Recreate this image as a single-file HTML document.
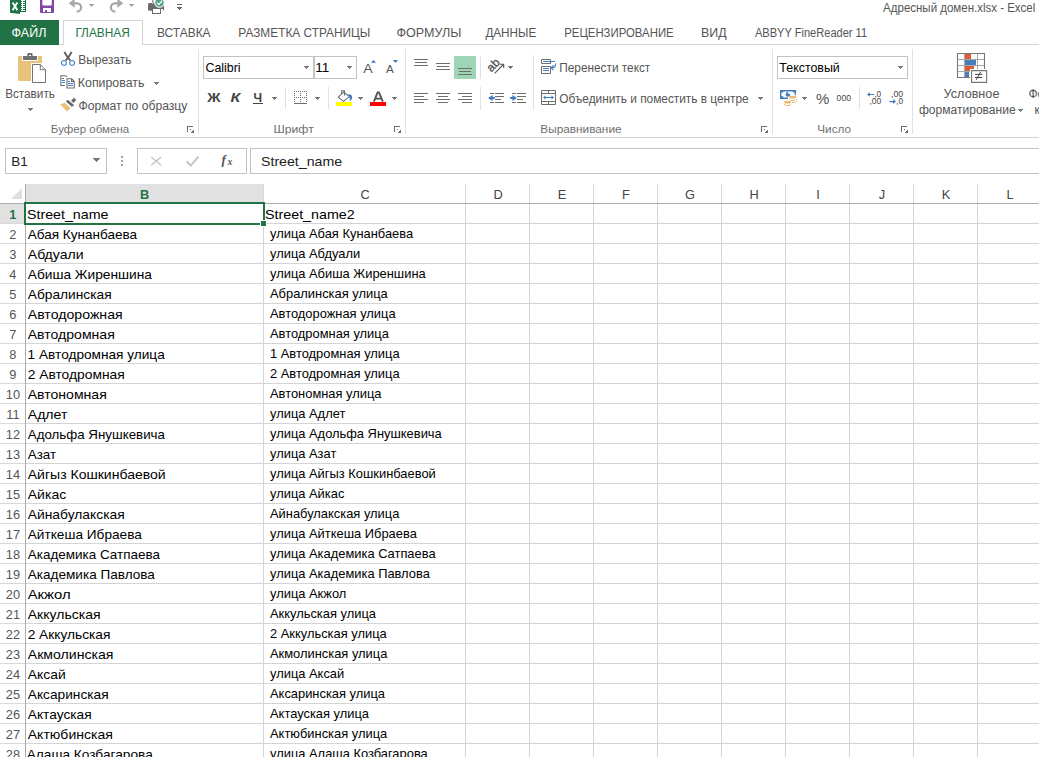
<!DOCTYPE html>
<html><head><meta charset="utf-8"><style>
html,body{margin:0;padding:0;background:#fff;overflow:hidden;width:1039px;height:757px}
svg{display:block;font-family:"Liberation Sans",sans-serif}
</style></head><body>
<svg width="1039" height="757" viewBox="0 0 1039 757" shape-rendering="crispEdges">
<path d="M10 -1H20V14L10 12.7Z" fill="#1f7244" shape-rendering="geometricPrecision" />
<path d="M12.6 2.4L17.4 10.2M17.4 2.4L12.6 10.2" fill="none" stroke="#fff" stroke-width="1.9" shape-rendering="geometricPrecision" />
<rect x="20" y="-1" width="6" height="13" fill="#1f7244" />
<rect x="21" y="0" width="4" height="11" fill="#fff" />
<rect x="21" y="1" width="1" height="1" fill="#1f7244" />
<rect x="23" y="1" width="2" height="1" fill="#1f7244" />
<rect x="21" y="3" width="1" height="1" fill="#1f7244" />
<rect x="23" y="3" width="2" height="1" fill="#1f7244" />
<rect x="21" y="5" width="1" height="1" fill="#1f7244" />
<rect x="23" y="5" width="2" height="1" fill="#1f7244" />
<rect x="21" y="7" width="1" height="1" fill="#1f7244" />
<rect x="23" y="7" width="2" height="1" fill="#1f7244" />
<rect x="21" y="9" width="1" height="1" fill="#1f7244" />
<rect x="23" y="9" width="2" height="1" fill="#1f7244" />
<path d="M40 -2H54V12Q54 13 53 13H41Q40 13 40 12Z" fill="#7f46a6" shape-rendering="geometricPrecision" />
<path d="M42.3 -2H51.8V4.6Q51.8 5.6 50.8 5.6H43.3Q42.3 5.6 42.3 4.6Z" fill="#fff" shape-rendering="geometricPrecision" />
<rect x="43" y="8" width="8" height="3.5" fill="#fff" />
<rect x="45.2" y="10" width="1.7" height="1.5" fill="#7f46a6" />
<path d="M73 3.3H77.2A3.9 4.1 0 0 1 77.2 11.5H76.6" fill="none" stroke="#a8a8a8" stroke-width="2.2" shape-rendering="geometricPrecision" />
<path d="M68.6 3.3L74.6 -1.2V7.8Z" fill="#a8a8a8" shape-rendering="geometricPrecision" />
<rect x="89" y="4" width="5" height="1" fill="#a8a8a8" />
<rect x="90" y="5" width="3" height="1" fill="#a8a8a8" />
<rect x="91" y="6" width="1" height="1" fill="#a8a8a8" />
<path d="M118.9 3.3H114.8A3.9 4.1 0 0 0 114.8 11.5H115.4" fill="none" stroke="#a8a8a8" stroke-width="2.2" shape-rendering="geometricPrecision" />
<path d="M123.4 3.3L117.4 -1.2V7.8Z" fill="#a8a8a8" shape-rendering="geometricPrecision" />
<rect x="129" y="4" width="5" height="1" fill="#a8a8a8" />
<rect x="130" y="5" width="3" height="1" fill="#a8a8a8" />
<rect x="131" y="6" width="1" height="1" fill="#a8a8a8" />
<path d="M149.5 3H162.5Q164 3 164 4.5V9.5Q164 10.8 162.5 10.8H149.5Q148 10.8 148 9.5V4.5Q148 3 149.5 3Z" fill="#6b6b6b" shape-rendering="geometricPrecision" />
<rect x="152.3" y="-1" width="3" height="4.5" fill="#fff" />
<path d="M152.8 -1V3.3H155" fill="none" stroke="#6b6b6b" stroke-width="1" shape-rendering="geometricPrecision" />
<rect x="151.5" y="8.3" width="9" height="6" fill="#6b6b6b" />
<rect x="152.5" y="9.3" width="7" height="4" fill="#fff" />
<rect x="161" y="9" width="1.5" height="1.5" fill="#fff" />
<path d="M159.5 2.6m-5.2 0a5.2 5.2 0 1 0 10.4 0a5.2 5.2 0 1 0 -10.4 0" fill="#fff" shape-rendering="geometricPrecision" />
<path d="M159.5 2.6m-4.2 0a4.2 4.2 0 1 0 8.4 0a4.2 4.2 0 1 0 -8.4 0" fill="#54a383" shape-rendering="geometricPrecision" />
<path d="M157 2.6L158.9 4.6L162.2 0.6" fill="none" stroke="#fff" stroke-width="1.3" shape-rendering="geometricPrecision" />
<rect x="177" y="4" width="5" height="1" fill="#666" />
<rect x="177" y="7" width="5" height="1" fill="#666" />
<rect x="178" y="8" width="3" height="1" fill="#666" />
<rect x="179" y="9" width="1" height="1" fill="#666" />
<text id="t1977a1d5" x="883.11" y="12.3" font-size="12.6" fill="#555" textLength="152.21" lengthAdjust="spacingAndGlyphs" >Адресный домен.xlsx - Excel</text>
<rect x="0" y="44" width="1039" height="1" fill="#d4d4d4" />
<rect x="0" y="20" width="59" height="25" fill="#217346" />
<text id="tc87bf31a" x="11.6" y="36.9" font-size="12.5" fill="#fff" textLength="34.8" lengthAdjust="spacingAndGlyphs" >ФАЙЛ</text>
<rect x="64" y="21" width="78" height="24" fill="#fff" />
<rect x="63" y="20" width="1" height="25" fill="#d4d4d4" />
<rect x="142" y="20" width="1" height="25" fill="#d4d4d4" />
<rect x="63" y="20" width="80" height="1" fill="#d4d4d4" />
<text id="tb99f075e" x="75.39" y="36.9" font-size="12.5" fill="#217346" textLength="54.31" lengthAdjust="spacingAndGlyphs" >ГЛАВНАЯ</text>
<text id="tcb75ce67" x="156.97" y="36.9" font-size="12.5" fill="#555" textLength="53.61" lengthAdjust="spacingAndGlyphs" >ВСТАВКА</text>
<text id="tc78e9aa1" x="238.29" y="36.9" font-size="12.5" fill="#555" textLength="132.02" lengthAdjust="spacingAndGlyphs" >РАЗМЕТКА СТРАНИЦЫ</text>
<text id="t75d292be" x="396.48" y="36.9" font-size="12.5" fill="#555" textLength="65.04" lengthAdjust="spacingAndGlyphs" >ФОРМУЛЫ</text>
<text id="tc64c64f3" x="485.4" y="36.9" font-size="12.5" fill="#555" textLength="50.81" lengthAdjust="spacingAndGlyphs" >ДАННЫЕ</text>
<text id="t7c4e0753" x="564.23" y="36.9" font-size="12.5" fill="#555" textLength="109.44" lengthAdjust="spacingAndGlyphs" >РЕЦЕНЗИРОВАНИЕ</text>
<text id="tdb230a6a" x="701.06" y="36.9" font-size="12.5" fill="#555" textLength="25.66" lengthAdjust="spacingAndGlyphs" >ВИД</text>
<text id="tfd37f0fb" x="754.88" y="36.9" font-size="12.5" fill="#555" textLength="112.24" lengthAdjust="spacingAndGlyphs" >ABBYY FineReader 11</text>
<rect x="0" y="137" width="1039" height="1" fill="#d4d4d4" />
<rect x="198" y="49" width="1" height="85" fill="#e1e1e1" />
<rect x="405" y="49" width="1" height="85" fill="#e1e1e1" />
<rect x="772" y="49" width="1" height="85" fill="#e1e1e1" />
<rect x="912" y="49" width="1" height="85" fill="#e1e1e1" />
<text id="te13d27d2" x="50.88" y="133" font-size="11.3" fill="#707070" textLength="78.3" lengthAdjust="spacingAndGlyphs" >Буфер обмена</text>
<text id="te6d80a87" x="273.4" y="133" font-size="11.3" fill="#707070" textLength="40.45" lengthAdjust="spacingAndGlyphs" >Шрифт</text>
<text id="t44c68264" x="540.3" y="133" font-size="11.3" fill="#707070" textLength="81.26" lengthAdjust="spacingAndGlyphs" >Выравнивание</text>
<text id="t2e869514" x="817.31" y="133" font-size="11.3" fill="#707070" textLength="33.66" lengthAdjust="spacingAndGlyphs" >Число</text>
<rect x="187" y="126" width="6" height="1" fill="#6d6d6d" />
<rect x="187" y="126" width="1" height="6" fill="#6d6d6d" />
<rect x="190" y="129" width="1" height="1" fill="#6d6d6d" />
<path d="M190 133H194V129Z" fill="#6d6d6d"/>
<rect x="394" y="126" width="6" height="1" fill="#6d6d6d" />
<rect x="394" y="126" width="1" height="6" fill="#6d6d6d" />
<rect x="397" y="129" width="1" height="1" fill="#6d6d6d" />
<path d="M397 133H401V129Z" fill="#6d6d6d"/>
<rect x="761" y="126" width="6" height="1" fill="#6d6d6d" />
<rect x="761" y="126" width="1" height="6" fill="#6d6d6d" />
<rect x="764" y="129" width="1" height="1" fill="#6d6d6d" />
<path d="M764 133H768V129Z" fill="#6d6d6d"/>
<rect x="901" y="126" width="6" height="1" fill="#6d6d6d" />
<rect x="901" y="126" width="1" height="6" fill="#6d6d6d" />
<rect x="904" y="129" width="1" height="1" fill="#6d6d6d" />
<path d="M904 133H908V129Z" fill="#6d6d6d"/>
<path d="M19 56H22V61H38V56H41Q42 56 42 57V80Q42 81 41 81H19Q18 81 18 80V57Q18 56 19 56Z" fill="#e8c27a" shape-rendering="geometricPrecision" />
<rect x="23" y="56.3" width="14" height="3.4" fill="#717171" />
<path d="M27.3 56.5V54.2Q27.3 53 28.5 53H31.4Q32.6 53 32.6 54.2V56.5Z" fill="#717171" shape-rendering="geometricPrecision" />
<rect x="29.1" y="54.6" width="1.8" height="1.6" fill="#fff" />
<path d="M31 63H41L47 69V84H31Z" fill="#fff" shape-rendering="geometricPrecision" />
<path d="M32.5 64.5H40.3L45.5 69.7V82.5H32.5Z" fill="#fff" stroke="#737373" stroke-width="1" shape-rendering="geometricPrecision" />
<path d="M40.3 64.5V69.7H45.5" fill="none" stroke="#737373" stroke-width="1" shape-rendering="geometricPrecision" />
<text id="t56c57bcc" x="5.13" y="98" font-size="12" fill="#555" textLength="49.78" lengthAdjust="spacingAndGlyphs" >Вставить</text>
<rect x="28" y="108" width="5" height="1" fill="#777" />
<rect x="29" y="109" width="3" height="1" fill="#777" />
<rect x="30" y="110" width="1" height="1" fill="#777" />
<path d="M64.4 51.8Q66 55.5 70.2 60.4M71.6 51.8Q70 55.5 65.8 60.4" fill="none" stroke="#5f5f5f" stroke-width="1.9" shape-rendering="geometricPrecision" />
<path d="M64 62.9m-2.4 0a2.4 2.4 0 1 0 4.8 0a2.4 2.4 0 1 0 -4.8 0M72.1 62.9m-2.4 0a2.4 2.4 0 1 0 4.8 0a2.4 2.4 0 1 0 -4.8 0" fill="none" stroke="#3f7cc2" stroke-width="1.1" shape-rendering="geometricPrecision" />
<text id="tf301976f" x="78.16" y="64.2" font-size="12" fill="#555" textLength="53.21" lengthAdjust="spacingAndGlyphs" >Вырезать</text>
<path d="M64.8 85.5H60.9V75.8H65.7L66.8 76.9" fill="none" stroke="#6d6d6d" stroke-width="1.1" shape-rendering="geometricPrecision" />
<rect x="62.2" y="78" width="2" height="0.9" fill="#3f7cc2" />
<rect x="62.2" y="80" width="2.8" height="0.9" fill="#3f7cc2" />
<rect x="62.2" y="82" width="2.8" height="0.9" fill="#3f7cc2" />
<path d="M67 78.8H71.7L74.2 81.3V88H67Z" fill="#fff" stroke="#6d6d6d" stroke-width="1.1" shape-rendering="geometricPrecision" />
<path d="M71.5 78.8V81.5H74.2" fill="none" stroke="#6d6d6d" stroke-width="1.1" shape-rendering="geometricPrecision" />
<rect x="68.3" y="81" width="1.8" height="0.9" fill="#3f7cc2" />
<rect x="68.3" y="83.1" width="4.5" height="0.9" fill="#3f7cc2" />
<rect x="68.3" y="85.1" width="4.5" height="0.9" fill="#3f7cc2" />
<text id="tcef0c78d" x="77.82" y="86.8" font-size="12" fill="#555" textLength="66.54" lengthAdjust="spacingAndGlyphs" >Копировать</text>
<rect x="154" y="82" width="5" height="1" fill="#777" />
<rect x="155" y="83" width="3" height="1" fill="#777" />
<rect x="156" y="84" width="1" height="1" fill="#777" />
<path d="M60.2 104.4L64.7 102.7L70.7 108.2L67 111.6Z" fill="#e8c27a" shape-rendering="geometricPrecision" />
<path d="M66.1 101.3L68.1 100.2L73.8 105.2L71.8 106.6Z" fill="#666" stroke="#666" stroke-width="0.6" shape-rendering="geometricPrecision" />
<path d="M71.5 100.3L74.2 98.2L76 99.8L73.4 102.7Z" fill="#666" stroke="#666" stroke-width="0.6" shape-rendering="geometricPrecision" />
<text id="taece5d67" x="78.46" y="110" font-size="12" fill="#555" textLength="108.95" lengthAdjust="spacingAndGlyphs" >Формат по образцу</text>
<rect x="203" y="56" width="111" height="1" fill="#c3c3c3" />
<rect x="203" y="78" width="111" height="1" fill="#c3c3c3" />
<rect x="203" y="56" width="1" height="23" fill="#c3c3c3" />
<rect x="313" y="56" width="1" height="23" fill="#c3c3c3" />
<rect x="314" y="56" width="43" height="1" fill="#c3c3c3" />
<rect x="314" y="78" width="43" height="1" fill="#c3c3c3" />
<rect x="314" y="56" width="1" height="23" fill="#c3c3c3" />
<rect x="356" y="56" width="1" height="23" fill="#c3c3c3" />
<text id="tc4bd09a6" x="205.45" y="72.4" font-size="12.8" fill="#000" textLength="35.2" lengthAdjust="spacingAndGlyphs" >Calibri</text>
<rect x="304" y="66" width="5" height="1" fill="#777" />
<rect x="305" y="67" width="3" height="1" fill="#777" />
<rect x="306" y="68" width="1" height="1" fill="#777" />
<text id="tbd68104b" x="315.33" y="72.4" font-size="12.8" fill="#000" textLength="14.07" lengthAdjust="spacingAndGlyphs" >11</text>
<rect x="347" y="66" width="5" height="1" fill="#777" />
<rect x="348" y="67" width="3" height="1" fill="#777" />
<rect x="349" y="68" width="1" height="1" fill="#777" />
<text id="t12a4005a" x="363.2" y="72.8" font-size="13.2" fill="#555" textLength="9.4" lengthAdjust="spacingAndGlyphs" >A</text>
<path d="M370.9 62.8L373.45 60L376 62.8Z" fill="#3f7cc2" shape-rendering="geometricPrecision" />
<text id="t12a4005a" x="386" y="72.8" font-size="10.6" fill="#555" textLength="7.8" lengthAdjust="spacingAndGlyphs" >A</text>
<path d="M392.9 60H398L395.45 63Z" fill="#3f7cc2" shape-rendering="geometricPrecision" />
<text id="tef8992c8" x="207.3" y="102.2" font-size="13" fill="#444" textLength="13.3" lengthAdjust="spacingAndGlyphs" font-weight="bold" >Ж</text>
<text id="tdbeebb8f" x="230.6" y="102.2" font-size="13" fill="#444" textLength="9.8" lengthAdjust="spacingAndGlyphs" font-weight="bold" font-style="italic" >К</text>
<text id="t7fb9947f" x="253.6" y="102.2" font-size="13" fill="#444" textLength="8.6" lengthAdjust="spacingAndGlyphs" font-weight="bold" >Ч</text>
<rect x="253" y="103" width="10" height="1" fill="#444" />
<rect x="272" y="97" width="5" height="1" fill="#777" />
<rect x="273" y="98" width="3" height="1" fill="#777" />
<rect x="274" y="99" width="1" height="1" fill="#777" />
<rect x="285" y="87" width="1" height="22" fill="#e1e1e1" />
<rect x="294" y="91" width="1" height="1" fill="#6d6d6d" />
<rect x="294" y="97" width="1" height="1" fill="#6d6d6d" />
<rect x="294" y="91" width="1" height="1" fill="#6d6d6d" />
<rect x="300" y="91" width="1" height="1" fill="#6d6d6d" />
<rect x="306" y="91" width="1" height="1" fill="#6d6d6d" />
<rect x="296" y="91" width="1" height="1" fill="#6d6d6d" />
<rect x="296" y="97" width="1" height="1" fill="#6d6d6d" />
<rect x="294" y="93" width="1" height="1" fill="#6d6d6d" />
<rect x="300" y="93" width="1" height="1" fill="#6d6d6d" />
<rect x="306" y="93" width="1" height="1" fill="#6d6d6d" />
<rect x="298" y="91" width="1" height="1" fill="#6d6d6d" />
<rect x="298" y="97" width="1" height="1" fill="#6d6d6d" />
<rect x="294" y="95" width="1" height="1" fill="#6d6d6d" />
<rect x="300" y="95" width="1" height="1" fill="#6d6d6d" />
<rect x="306" y="95" width="1" height="1" fill="#6d6d6d" />
<rect x="300" y="91" width="1" height="1" fill="#6d6d6d" />
<rect x="300" y="97" width="1" height="1" fill="#6d6d6d" />
<rect x="294" y="97" width="1" height="1" fill="#6d6d6d" />
<rect x="300" y="97" width="1" height="1" fill="#6d6d6d" />
<rect x="306" y="97" width="1" height="1" fill="#6d6d6d" />
<rect x="302" y="91" width="1" height="1" fill="#6d6d6d" />
<rect x="302" y="97" width="1" height="1" fill="#6d6d6d" />
<rect x="294" y="99" width="1" height="1" fill="#6d6d6d" />
<rect x="300" y="99" width="1" height="1" fill="#6d6d6d" />
<rect x="306" y="99" width="1" height="1" fill="#6d6d6d" />
<rect x="304" y="91" width="1" height="1" fill="#6d6d6d" />
<rect x="304" y="97" width="1" height="1" fill="#6d6d6d" />
<rect x="294" y="101" width="1" height="1" fill="#6d6d6d" />
<rect x="300" y="101" width="1" height="1" fill="#6d6d6d" />
<rect x="306" y="101" width="1" height="1" fill="#6d6d6d" />
<rect x="306" y="91" width="1" height="1" fill="#6d6d6d" />
<rect x="306" y="97" width="1" height="1" fill="#6d6d6d" />
<rect x="294" y="103" width="1" height="1" fill="#6d6d6d" />
<rect x="300" y="103" width="1" height="1" fill="#6d6d6d" />
<rect x="306" y="103" width="1" height="1" fill="#6d6d6d" />
<rect x="294" y="103" width="13" height="1" fill="#6d6d6d" />
<rect x="315" y="97" width="5" height="1" fill="#777" />
<rect x="316" y="98" width="3" height="1" fill="#777" />
<rect x="317" y="99" width="1" height="1" fill="#777" />
<rect x="328" y="87" width="1" height="22" fill="#e1e1e1" />
<path d="M338.3 97.2L343.6 91.9L349.4 96.6L343.5 101.3Z" fill="#fff" stroke="#6d6d6d" stroke-width="1.05" shape-rendering="geometricPrecision" />
<path d="M341.7 94V90.7H344.5V95.6" fill="none" stroke="#6d6d6d" stroke-width="1.1" shape-rendering="geometricPrecision" />
<path d="M348.2 94.1Q352.6 94.6 352.1 98Q351.6 100.2 349.6 101.3Q350.3 98.6 349.2 96.8Z" fill="#3f7cc2" shape-rendering="geometricPrecision" />
<rect x="336" y="102" width="16" height="4" fill="#ffff00" />
<rect x="358" y="97" width="5" height="1" fill="#777" />
<rect x="359" y="98" width="3" height="1" fill="#777" />
<rect x="360" y="99" width="1" height="1" fill="#777" />
<path d="M373.9 101.6L377.6 92.4H379L382.8 101.6M375.4 98.6H381.3" fill="none" stroke="#555" stroke-width="1.9" shape-rendering="geometricPrecision" />
<rect x="370" y="102" width="16" height="4" fill="#ff0000" />
<rect x="392" y="97" width="5" height="1" fill="#777" />
<rect x="393" y="98" width="3" height="1" fill="#777" />
<rect x="394" y="99" width="1" height="1" fill="#777" />
<rect x="414" y="59" width="14" height="1" fill="#6d6d6d" />
<rect x="415" y="62" width="12" height="1" fill="#6d6d6d" />
<rect x="414" y="65" width="14" height="1" fill="#6d6d6d" />
<rect x="436" y="63" width="14" height="1" fill="#6d6d6d" />
<rect x="437" y="66" width="12" height="1" fill="#6d6d6d" />
<rect x="436" y="69" width="14" height="1" fill="#6d6d6d" />
<rect x="454" y="56" width="22" height="23" fill="#9fd5b7" />
<rect x="458" y="68" width="14" height="1" fill="#6d6d6d" />
<rect x="459" y="71" width="12" height="1" fill="#6d6d6d" />
<rect x="458" y="74" width="14" height="1" fill="#6d6d6d" />
<rect x="480" y="56" width="1" height="23" fill="#e1e1e1" />
<text x="0" y="0" font-size="11.8" fill="#555" stroke="#555" stroke-width="0.35" transform="translate(491.3 72.4) rotate(-45)">ab</text>
<path d="M494.6 73.3L503.4 64.5" fill="none" stroke="#555" stroke-width="1.1" shape-rendering="geometricPrecision" />
<path d="M500 64.3H503.7V68" fill="none" stroke="#555" stroke-width="1.1" shape-rendering="geometricPrecision" />
<rect x="508" y="66" width="5" height="1" fill="#777" />
<rect x="509" y="67" width="3" height="1" fill="#777" />
<rect x="510" y="68" width="1" height="1" fill="#777" />
<rect x="414" y="93" width="14" height="1" fill="#6d6d6d" />
<rect x="436" y="93" width="14" height="1" fill="#6d6d6d" />
<rect x="458" y="93" width="14" height="1" fill="#6d6d6d" />
<rect x="414" y="96" width="10" height="1" fill="#6d6d6d" />
<rect x="438" y="96" width="10" height="1" fill="#6d6d6d" />
<rect x="462" y="96" width="10" height="1" fill="#6d6d6d" />
<rect x="414" y="99" width="14" height="1" fill="#6d6d6d" />
<rect x="436" y="99" width="14" height="1" fill="#6d6d6d" />
<rect x="458" y="99" width="14" height="1" fill="#6d6d6d" />
<rect x="414" y="102" width="10" height="1" fill="#6d6d6d" />
<rect x="438" y="102" width="10" height="1" fill="#6d6d6d" />
<rect x="462" y="102" width="10" height="1" fill="#6d6d6d" />
<rect x="480" y="87" width="1" height="23" fill="#e1e1e1" />
<rect x="490" y="93" width="4" height="1" fill="#6d6d6d" />
<rect x="490" y="102" width="4" height="1" fill="#6d6d6d" />
<rect x="495" y="93" width="9" height="1" fill="#6d6d6d" />
<rect x="495" y="96" width="9" height="1" fill="#6d6d6d" />
<rect x="495" y="99" width="6" height="1" fill="#6d6d6d" />
<rect x="495" y="102" width="9" height="1" fill="#6d6d6d" />
<rect x="512" y="93" width="4" height="1" fill="#6d6d6d" />
<rect x="512" y="102" width="4" height="1" fill="#6d6d6d" />
<rect x="517" y="93" width="9" height="1" fill="#6d6d6d" />
<rect x="517" y="96" width="9" height="1" fill="#6d6d6d" />
<rect x="517" y="99" width="6" height="1" fill="#6d6d6d" />
<rect x="517" y="102" width="9" height="1" fill="#6d6d6d" />
<path d="M488 98L492.6 95.1V97.1H494.9V98.9H492.6V100.9Z" fill="#3f7cc2" shape-rendering="geometricPrecision" />
<path d="M517 98L512.4 95.1V97.1H510.1V98.9H512.4V100.9Z" fill="#3f7cc2" shape-rendering="geometricPrecision" />
<rect x="533" y="55" width="1" height="55" fill="#e1e1e1" />
<path d="M541.5 59.5H550.5V63.5H541.5Z" fill="#fff" stroke="#6d6d6d" stroke-width="1" shape-rendering="geometricPrecision" />
<rect x="543" y="61" width="12" height="1" fill="#3f7cc2" />
<path d="M541.5 66.5H550.5V73.5H541.5Z" fill="#fff" stroke="#6d6d6d" stroke-width="1" shape-rendering="geometricPrecision" />
<rect x="543" y="68" width="6" height="1" fill="#3f7cc2" />
<rect x="543" y="70" width="6" height="1" fill="#3f7cc2" />
<path d="M555.6 63.4C555.8 66.6 554.6 67.7 551.4 67.7" fill="none" stroke="#3f7cc2" stroke-width="1.1" shape-rendering="geometricPrecision" />
<path d="M553.4 65.4L551.1 67.7L553.4 70" fill="none" stroke="#3f7cc2" stroke-width="1.1" shape-rendering="geometricPrecision" />
<text id="t0a4ebec3" x="559.24" y="72" font-size="12" fill="#555" textLength="91.05" lengthAdjust="spacingAndGlyphs" >Перенести текст</text>
<path d="M541.5 90.5H555.5V104.5H541.5ZM541.5 93.5H555.5M541.5 101.5H555.5M548.5 90.5V93.5M548.5 101.5V104.5" fill="#fff" stroke="#6d6d6d" stroke-width="1" shape-rendering="geometricPrecision" />
<rect x="544" y="97" width="9" height="1" fill="#3f7cc2" />
<path d="M543 97.5L545.5 95.5V99.5Z" fill="#3f7cc2" shape-rendering="geometricPrecision" />
<path d="M554 97.5L551.5 95.5V99.5Z" fill="#3f7cc2" shape-rendering="geometricPrecision" />
<text id="t1bef838a" x="559.34" y="103" font-size="12" fill="#555" textLength="189.37" lengthAdjust="spacingAndGlyphs" >Объединить и поместить в центре</text>
<rect x="758" y="97" width="5" height="1" fill="#777" />
<rect x="759" y="98" width="3" height="1" fill="#777" />
<rect x="760" y="99" width="1" height="1" fill="#777" />
<rect x="777" y="56" width="131" height="1" fill="#c3c3c3" />
<rect x="777" y="78" width="131" height="1" fill="#c3c3c3" />
<rect x="777" y="56" width="1" height="23" fill="#c3c3c3" />
<rect x="907" y="56" width="1" height="23" fill="#c3c3c3" />
<text id="tf8c6ba42" x="779.37" y="71.8" font-size="12.8" fill="#000" textLength="60.4" lengthAdjust="spacingAndGlyphs" >Текстовый</text>
<rect x="898" y="66" width="5" height="1" fill="#777" />
<rect x="899" y="67" width="3" height="1" fill="#777" />
<rect x="900" y="68" width="1" height="1" fill="#777" />
<path d="M788 98.2H780.7V90.7H795.4V95.2" fill="none" stroke="#3f7cc2" stroke-width="1.4" shape-rendering="geometricPrecision" />
<path d="M780.5 90.5H783.2V92.6H780.5ZM780.5 96.2H783.2V98.5H780.5ZM792.8 90.5H795.5V92.6H792.8Z" fill="#3f7cc2" shape-rendering="geometricPrecision" />
<circle cx="788" cy="94.4" r="2.3" fill="#3f7cc2" shape-rendering="geometricPrecision"/>
<path d="M788.3 94.1L790.6 94.1A2.4 2.4 0 0 0 788.3 91.8Z" fill="#fff" shape-rendering="geometricPrecision" />
<path d="M790.3 95.9H795.2Q796.2 95.9 796.2 97.2Q796.2 98.6 795.2 98.6H790.3Q789.2 98.6 789.2 97.2Q789.2 95.9 790.3 95.9Z" fill="#e6bb6e" shape-rendering="geometricPrecision" />
<rect x="791.3" y="99.8" width="4" height="1.2" fill="#e6bb6e" />
<rect x="792" y="102" width="3.4" height="1.1" fill="#e6bb6e" />
<rect x="789.3" y="99.2" width="1" height="0.9" fill="#e6bb6e" />
<rect x="795.6" y="99.2" width="1" height="0.9" fill="#e6bb6e" />
<rect x="795.6" y="101.2" width="1" height="0.9" fill="#e6bb6e" />
<path d="M785.3 100.9H790Q791 100.9 791 102.2Q791 103.6 790 103.6H785.3Q784.2 103.6 784.2 102.2Q784.2 100.9 785.3 100.9Z" fill="#e6bb6e" shape-rendering="geometricPrecision" />
<rect x="785.2" y="104.9" width="4.8" height="1.1" fill="#e6bb6e" />
<rect x="784.1" y="104.1" width="1" height="0.9" fill="#e6bb6e" />
<rect x="790.3" y="104.1" width="1" height="0.9" fill="#e6bb6e" />
<rect x="802" y="97" width="5" height="1" fill="#777" />
<rect x="803" y="98" width="3" height="1" fill="#777" />
<rect x="804" y="99" width="1" height="1" fill="#777" />
<text id="t9fa0b448" x="816" y="104" font-size="15" fill="#555" textLength="13.3" lengthAdjust="spacingAndGlyphs" >%</text>
<text id="t0d8dd017" x="836.6" y="100.8" font-size="9.4" fill="#444" textLength="14.4" lengthAdjust="spacingAndGlyphs" >000</text>
<rect x="859" y="87" width="1" height="22" fill="#e1e1e1" />
<path d="M867 94.5L869.8 92.2V93.9H874V95.1H869.8V96.8Z" fill="#3f7cc2" shape-rendering="geometricPrecision" />
<text id="t28fc6944" x="876.4" y="97" font-size="8.4" fill="#444" textLength="4.6" lengthAdjust="spacingAndGlyphs" >0</text>
<text id="t4a2c242d" x="869.4" y="104" font-size="8.4" fill="#444" textLength="11.8" lengthAdjust="spacingAndGlyphs" >,00</text>
<text id="tfe232d98" x="874.2" y="97" font-size="8.4" fill="#444" >,</text>
<text id="t0e0c9152" x="891" y="97" font-size="8.4" fill="#444" textLength="12.2" lengthAdjust="spacingAndGlyphs" >,00</text>
<path d="M896 101.6L893.2 99.3V101H889.3V102.2H893.2V103.9Z" fill="#3f7cc2" shape-rendering="geometricPrecision" />
<text id="tf601b50b" x="896.2" y="104" font-size="8.4" fill="#444" textLength="6.9" lengthAdjust="spacingAndGlyphs" >,0</text>
<rect x="958" y="54" width="27" height="24" fill="#fff" />
<rect x="965" y="54" width="6" height="5" fill="#dd5b35" />
<rect x="965" y="60" width="11" height="5" fill="#4a7ebb" />
<rect x="965" y="66" width="9" height="5" fill="#dd5b35" />
<rect x="965" y="72" width="4" height="5" fill="#4a7ebb" />
<rect x="958" y="59" width="26" height="1" fill="#a8a8a8" />
<rect x="958" y="65" width="26" height="1" fill="#a8a8a8" />
<rect x="958" y="71" width="26" height="1" fill="#a8a8a8" />
<rect x="964" y="54" width="1" height="23" fill="#a8a8a8" />
<rect x="977" y="54" width="1" height="23" fill="#a8a8a8" />
<path d="M957.5 53.5H984.5V77.5H957.5Z" fill="none" stroke="#777" stroke-width="1.1" shape-rendering="geometricPrecision" />
<rect x="970" y="69" width="18" height="15" fill="#fff" />
<path d="M971.6 70.6H986.6V82.4H971.6Z" fill="#fff" stroke="#777" stroke-width="1.1" shape-rendering="geometricPrecision" />
<path d="M975 74.4H982.2M975 77.5H982.2M976.2 79.8L980.6 72" fill="none" stroke="#444" stroke-width="1" shape-rendering="geometricPrecision" />
<text id="t0324c2cd" x="943.62" y="98" font-size="12" fill="#555" textLength="55.8" lengthAdjust="spacingAndGlyphs" >Условное</text>
<text id="t61d7e19c" x="918.97" y="113.8" font-size="12" fill="#555" textLength="96.67" lengthAdjust="spacingAndGlyphs" >форматирование</text>
<rect x="1018" y="109" width="5" height="1" fill="#777" />
<rect x="1019" y="110" width="3" height="1" fill="#777" />
<rect x="1020" y="111" width="1" height="1" fill="#777" />
<text id="t906b1567" x="1028.5" y="98" font-size="12" fill="#555" >Фо</text>
<text id="t70918954" x="1034.5" y="113.8" font-size="12" fill="#555" >к</text>
<rect x="5" y="148" width="102" height="1" fill="#c3c3c3" />
<rect x="5" y="173" width="102" height="1" fill="#c3c3c3" />
<rect x="5" y="148" width="1" height="26" fill="#c3c3c3" />
<rect x="106" y="148" width="1" height="26" fill="#c3c3c3" />
<text id="te322b3f4" x="11.15" y="165.9" font-size="12.8" fill="#222" textLength="16.58" lengthAdjust="spacingAndGlyphs" >B1</text>
<rect x="93" y="158" width="7" height="1" fill="#777" />
<rect x="94" y="159" width="5" height="1" fill="#777" />
<rect x="95" y="160" width="3" height="1" fill="#777" />
<rect x="96" y="161" width="1" height="1" fill="#777" />
<rect x="121" y="156" width="2" height="2" fill="#a0a0a0" />
<rect x="121" y="160" width="2" height="2" fill="#a0a0a0" />
<rect x="121" y="164" width="2" height="2" fill="#a0a0a0" />
<rect x="137" y="148" width="110" height="1" fill="#c3c3c3" />
<rect x="137" y="173" width="110" height="1" fill="#c3c3c3" />
<rect x="137" y="148" width="1" height="26" fill="#c3c3c3" />
<rect x="246" y="148" width="1" height="26" fill="#c3c3c3" />
<path d="M151.2 157L161.2 165.2M161.2 157L151.2 165.2" fill="none" stroke="#c4c4c4" stroke-width="1.4" shape-rendering="geometricPrecision" />
<path d="M186.6 161.2L190.8 165.6L198.4 156.6" fill="none" stroke="#c4c4c4" stroke-width="2" shape-rendering="geometricPrecision" />
<text id="tfc27babe" x="221.6" y="164" font-size="13" fill="#555" font-weight="bold" font-style="italic" font-family="Liberation Serif" >f</text>
<text id="t1be6a552" x="227.4" y="164.6" font-size="9.5" fill="#555" font-weight="bold" font-style="italic" font-family="Liberation Serif" >x</text>
<rect x="250" y="148" width="796" height="1" fill="#c3c3c3" />
<rect x="250" y="173" width="796" height="1" fill="#c3c3c3" />
<rect x="250" y="148" width="1" height="26" fill="#c3c3c3" />
<rect x="1045" y="148" width="1" height="26" fill="#c3c3c3" />
<text id="t3e4be9f1" x="261.04" y="166.2" font-size="12.8" fill="#222" textLength="81.06" lengthAdjust="spacingAndGlyphs" >Street_name</text>
<rect x="0" y="203" width="1039" height="1" fill="#ababab" />
<rect x="26" y="184" width="237" height="18" fill="#e1e1e1" />
<rect x="25" y="184" width="1" height="19" fill="#ababab" />
<rect x="263" y="184" width="1" height="19" fill="#d8d8d8" />
<rect x="465" y="184" width="1" height="19" fill="#d8d8d8" />
<rect x="529" y="184" width="1" height="19" fill="#d8d8d8" />
<rect x="593" y="184" width="1" height="19" fill="#d8d8d8" />
<rect x="657" y="184" width="1" height="19" fill="#d8d8d8" />
<rect x="721" y="184" width="1" height="19" fill="#d8d8d8" />
<rect x="785" y="184" width="1" height="19" fill="#d8d8d8" />
<rect x="849" y="184" width="1" height="19" fill="#d8d8d8" />
<rect x="913" y="184" width="1" height="19" fill="#d8d8d8" />
<rect x="977" y="184" width="1" height="19" fill="#d8d8d8" />
<path d="M22 188v11h-11z" fill="#dfdfdf" shape-rendering="geometricPrecision"/>
<text id="t9e6b1b0c" x="144.5" y="198.8" font-size="12.8" fill="#217346" font-weight="bold" text-anchor="middle" >B</text>
<text id="t1b9c359b" x="365.0" y="198.8" font-size="12.8" fill="#444" text-anchor="middle" >C</text>
<text id="t54815338" x="498.0" y="198.8" font-size="12.8" fill="#444" text-anchor="middle" >D</text>
<text id="te131cb71" x="562.0" y="198.8" font-size="12.8" fill="#444" text-anchor="middle" >E</text>
<text id="t83fea365" x="626.0" y="198.8" font-size="12.8" fill="#444" text-anchor="middle" >F</text>
<text id="t3371f1f0" x="690.0" y="198.8" font-size="12.8" fill="#444" text-anchor="middle" >G</text>
<text id="te11b1a74" x="754.0" y="198.8" font-size="12.8" fill="#444" text-anchor="middle" >H</text>
<text id="tb252ea78" x="818.0" y="198.8" font-size="12.8" fill="#444" text-anchor="middle" >I</text>
<text id="t9d8aef66" x="882.0" y="198.8" font-size="12.8" fill="#444" text-anchor="middle" >J</text>
<text id="t5a21a96d" x="946.0" y="198.8" font-size="12.8" fill="#444" text-anchor="middle" >K</text>
<text id="t4000d15c" x="1010.0" y="198.8" font-size="12.8" fill="#444" text-anchor="middle" >L</text>
<rect x="25" y="204" width="1" height="553" fill="#ababab" />
<rect x="0" y="204" width="25" height="19" fill="#e1e1e1" />
<rect x="0" y="223" width="25" height="1" fill="#dadada" />
<rect x="26" y="223" width="1013" height="1" fill="#d4d4d4" />
<rect x="0" y="243" width="25" height="1" fill="#dadada" />
<rect x="26" y="243" width="1013" height="1" fill="#d4d4d4" />
<rect x="0" y="263" width="25" height="1" fill="#dadada" />
<rect x="26" y="263" width="1013" height="1" fill="#d4d4d4" />
<rect x="0" y="283" width="25" height="1" fill="#dadada" />
<rect x="26" y="283" width="1013" height="1" fill="#d4d4d4" />
<rect x="0" y="303" width="25" height="1" fill="#dadada" />
<rect x="26" y="303" width="1013" height="1" fill="#d4d4d4" />
<rect x="0" y="323" width="25" height="1" fill="#dadada" />
<rect x="26" y="323" width="1013" height="1" fill="#d4d4d4" />
<rect x="0" y="343" width="25" height="1" fill="#dadada" />
<rect x="26" y="343" width="1013" height="1" fill="#d4d4d4" />
<rect x="0" y="363" width="25" height="1" fill="#dadada" />
<rect x="26" y="363" width="1013" height="1" fill="#d4d4d4" />
<rect x="0" y="383" width="25" height="1" fill="#dadada" />
<rect x="26" y="383" width="1013" height="1" fill="#d4d4d4" />
<rect x="0" y="403" width="25" height="1" fill="#dadada" />
<rect x="26" y="403" width="1013" height="1" fill="#d4d4d4" />
<rect x="0" y="423" width="25" height="1" fill="#dadada" />
<rect x="26" y="423" width="1013" height="1" fill="#d4d4d4" />
<rect x="0" y="443" width="25" height="1" fill="#dadada" />
<rect x="26" y="443" width="1013" height="1" fill="#d4d4d4" />
<rect x="0" y="463" width="25" height="1" fill="#dadada" />
<rect x="26" y="463" width="1013" height="1" fill="#d4d4d4" />
<rect x="0" y="483" width="25" height="1" fill="#dadada" />
<rect x="26" y="483" width="1013" height="1" fill="#d4d4d4" />
<rect x="0" y="503" width="25" height="1" fill="#dadada" />
<rect x="26" y="503" width="1013" height="1" fill="#d4d4d4" />
<rect x="0" y="523" width="25" height="1" fill="#dadada" />
<rect x="26" y="523" width="1013" height="1" fill="#d4d4d4" />
<rect x="0" y="543" width="25" height="1" fill="#dadada" />
<rect x="26" y="543" width="1013" height="1" fill="#d4d4d4" />
<rect x="0" y="563" width="25" height="1" fill="#dadada" />
<rect x="26" y="563" width="1013" height="1" fill="#d4d4d4" />
<rect x="0" y="583" width="25" height="1" fill="#dadada" />
<rect x="26" y="583" width="1013" height="1" fill="#d4d4d4" />
<rect x="0" y="603" width="25" height="1" fill="#dadada" />
<rect x="26" y="603" width="1013" height="1" fill="#d4d4d4" />
<rect x="0" y="623" width="25" height="1" fill="#dadada" />
<rect x="26" y="623" width="1013" height="1" fill="#d4d4d4" />
<rect x="0" y="643" width="25" height="1" fill="#dadada" />
<rect x="26" y="643" width="1013" height="1" fill="#d4d4d4" />
<rect x="0" y="663" width="25" height="1" fill="#dadada" />
<rect x="26" y="663" width="1013" height="1" fill="#d4d4d4" />
<rect x="0" y="683" width="25" height="1" fill="#dadada" />
<rect x="26" y="683" width="1013" height="1" fill="#d4d4d4" />
<rect x="0" y="703" width="25" height="1" fill="#dadada" />
<rect x="26" y="703" width="1013" height="1" fill="#d4d4d4" />
<rect x="0" y="723" width="25" height="1" fill="#dadada" />
<rect x="26" y="723" width="1013" height="1" fill="#d4d4d4" />
<rect x="0" y="743" width="25" height="1" fill="#dadada" />
<rect x="26" y="743" width="1013" height="1" fill="#d4d4d4" />
<rect x="0" y="763" width="25" height="1" fill="#dadada" />
<rect x="26" y="763" width="1013" height="1" fill="#d4d4d4" />
<rect x="263" y="204" width="1" height="553" fill="#d4d4d4" />
<rect x="465" y="204" width="1" height="553" fill="#d4d4d4" />
<rect x="529" y="204" width="1" height="553" fill="#d4d4d4" />
<rect x="593" y="204" width="1" height="553" fill="#d4d4d4" />
<rect x="657" y="204" width="1" height="553" fill="#d4d4d4" />
<rect x="721" y="204" width="1" height="553" fill="#d4d4d4" />
<rect x="785" y="204" width="1" height="553" fill="#d4d4d4" />
<rect x="849" y="204" width="1" height="553" fill="#d4d4d4" />
<rect x="913" y="204" width="1" height="553" fill="#d4d4d4" />
<rect x="977" y="204" width="1" height="553" fill="#d4d4d4" />
<rect x="1041" y="204" width="1" height="553" fill="#d4d4d4" />
<text id="tbb1ef754" x="12.9" y="219" font-size="12.8" fill="#217346" font-weight="bold" text-anchor="middle" >1</text>
<text id="t2096586c" x="26.98" y="219" font-size="13.2" fill="#000" textLength="81.53" lengthAdjust="spacingAndGlyphs" >Street_name</text>
<text id="t752edd25" x="264.99" y="219" font-size="13.2" fill="#000" textLength="89.74" lengthAdjust="spacingAndGlyphs" >Street_name2</text>
<text id="t540928a8" x="12.9" y="239" font-size="12.8" fill="#555" text-anchor="middle" >2</text>
<text id="t91a15680" x="27.74" y="239" font-size="13.2" fill="#000" textLength="109.3" lengthAdjust="spacingAndGlyphs" >Абая Кунанбаева</text>
<text id="tacba7de9" x="270" y="238" font-size="12.9" fill="#000" >улица Абая Кунанбаева</text>
<text id="tf6860d4d" x="12.9" y="259" font-size="12.8" fill="#555" text-anchor="middle" >3</text>
<text id="t4c052ed5" x="27.74" y="259" font-size="13.2" fill="#000" textLength="55.84" lengthAdjust="spacingAndGlyphs" >Абдуали</text>
<text id="t1eb77ad1" x="270" y="258" font-size="12.9" fill="#000" >улица Абдуали</text>
<text id="t4e51ad27" x="12.9" y="279" font-size="12.8" fill="#555" text-anchor="middle" >4</text>
<text id="tfbd31d5b" x="27.74" y="279" font-size="13.2" fill="#000" textLength="124.13" lengthAdjust="spacingAndGlyphs" >Абиша Жиреншина</text>
<text id="t256c9fc4" x="270" y="278" font-size="12.9" fill="#000" >улица Абиша Жиреншина</text>
<text id="t8887b2f5" x="12.9" y="299" font-size="12.8" fill="#555" text-anchor="middle" >5</text>
<text id="t0d2672db" x="27.74" y="299" font-size="13.2" fill="#000" textLength="83.89" lengthAdjust="spacingAndGlyphs" >Абралинская</text>
<text id="t417e76b4" x="270" y="298" font-size="12.9" fill="#000" >Абралинская улица</text>
<text id="te4d65e03" x="12.9" y="319" font-size="12.8" fill="#555" text-anchor="middle" >6</text>
<text id="t0794ba6f" x="27.74" y="319" font-size="13.2" fill="#000" textLength="94.97" lengthAdjust="spacingAndGlyphs" >Автодорожная</text>
<text id="tb605a182" x="270" y="318" font-size="12.9" fill="#000" >Автодорожная улица</text>
<text id="t02c72533" x="12.9" y="339" font-size="12.8" fill="#555" text-anchor="middle" >7</text>
<text id="tf61ceab8" x="27.74" y="339" font-size="13.2" fill="#000" textLength="87.05" lengthAdjust="spacingAndGlyphs" >Автодромная</text>
<text id="t13cfbc00" x="270" y="338" font-size="12.9" fill="#000" >Автодромная улица</text>
<text id="td5418a26" x="12.9" y="359" font-size="12.8" fill="#555" text-anchor="middle" >8</text>
<text id="t1defbf24" x="27.61" y="359" font-size="13.2" fill="#000" textLength="137.15" lengthAdjust="spacingAndGlyphs" >1 Автодромная улица</text>
<text id="tb7026db4" x="270" y="358" font-size="12.9" fill="#000" >1 Автодромная улица</text>
<text id="taf55336a" x="12.9" y="379" font-size="12.8" fill="#555" text-anchor="middle" >9</text>
<text id="t2c8c5213" x="27.66" y="379" font-size="13.2" fill="#000" textLength="97.07" lengthAdjust="spacingAndGlyphs" >2 Автодромная</text>
<text id="t83df5b0f" x="270" y="378" font-size="12.9" fill="#000" >2 Автодромная улица</text>
<text id="t404a2e3c" x="12.9" y="399" font-size="12.8" fill="#555" text-anchor="middle" >10</text>
<text id="tc5a06970" x="27.74" y="399" font-size="13.2" fill="#000" textLength="79.05" lengthAdjust="spacingAndGlyphs" >Автономная</text>
<text id="td15c26fb" x="270" y="398" font-size="12.9" fill="#000" >Автономная улица</text>
<text id="tdb0ec882" x="12.9" y="419" font-size="12.8" fill="#555" text-anchor="middle" >11</text>
<text id="t41e7cfad" x="27.74" y="419" font-size="13.2" fill="#000" textLength="39.66" lengthAdjust="spacingAndGlyphs" >Адлет</text>
<text id="tf846c49d" x="270" y="418" font-size="12.9" fill="#000" >улица Адлет</text>
<text id="t190fa44b" x="12.9" y="439" font-size="12.8" fill="#555" text-anchor="middle" >12</text>
<text id="te30a7a7e" x="27.74" y="439" font-size="13.2" fill="#000" textLength="137.23" lengthAdjust="spacingAndGlyphs" >Адольфа Янушкевича</text>
<text id="te1711278" x="270" y="438" font-size="12.9" fill="#000" >улица Адольфа Янушкевича</text>
<text id="tc1700910" x="12.9" y="459" font-size="12.8" fill="#555" text-anchor="middle" >13</text>
<text id="td25e671e" x="27.74" y="459" font-size="13.2" fill="#000" textLength="28.48" lengthAdjust="spacingAndGlyphs" >Азат</text>
<text id="t008b3240" x="270" y="458" font-size="12.9" fill="#000" >улица Азат</text>
<text id="t40660bc6" x="12.9" y="479" font-size="12.8" fill="#555" text-anchor="middle" >14</text>
<text id="tc4564a99" x="27.74" y="479" font-size="13.2" fill="#000" textLength="137.95" lengthAdjust="spacingAndGlyphs" >Айгыз Кошкинбаевой</text>
<text id="t307fb1eb" x="270" y="478" font-size="12.9" fill="#000" >улица Айгыз Кошкинбаевой</text>
<text id="t5b68646a" x="12.9" y="499" font-size="12.8" fill="#555" text-anchor="middle" >15</text>
<text id="tc3c955f6" x="27.74" y="499" font-size="13.2" fill="#000" textLength="38.47" lengthAdjust="spacingAndGlyphs" >Айкас</text>
<text id="tb7eddc7d" x="270" y="498" font-size="12.9" fill="#000" >улица Айкас</text>
<text id="t8e8d7905" x="12.9" y="519" font-size="12.8" fill="#555" text-anchor="middle" >16</text>
<text id="t3aeabab4" x="27.74" y="519" font-size="13.2" fill="#000" textLength="96.93" lengthAdjust="spacingAndGlyphs" >Айнабулакская</text>
<text id="t2e89bf10" x="270" y="518" font-size="12.9" fill="#000" >Айнабулакская улица</text>
<text id="tec40cd07" x="12.9" y="539" font-size="12.8" fill="#555" text-anchor="middle" >17</text>
<text id="t199704f5" x="27.74" y="539" font-size="13.2" fill="#000" textLength="114.17" lengthAdjust="spacingAndGlyphs" >Айткеша Ибраева</text>
<text id="t00a17923" x="270" y="538" font-size="12.9" fill="#000" >улица Айткеша Ибраева</text>
<text id="t4fa02858" x="12.9" y="559" font-size="12.8" fill="#555" text-anchor="middle" >18</text>
<text id="t421f29b6" x="27.74" y="559" font-size="13.2" fill="#000" textLength="132.27" lengthAdjust="spacingAndGlyphs" >Академика Сатпаева</text>
<text id="t8dad4ae7" x="270" y="558" font-size="12.9" fill="#000" >улица Академика Сатпаева</text>
<text id="t1c2ac6e9" x="12.9" y="579" font-size="12.8" fill="#555" text-anchor="middle" >19</text>
<text id="tda180d62" x="27.74" y="579" font-size="13.2" fill="#000" textLength="127.11" lengthAdjust="spacingAndGlyphs" >Академика Павлова</text>
<text id="t65b4265a" x="270" y="578" font-size="12.9" fill="#000" >улица Академика Павлова</text>
<text id="t25a7df9a" x="12.9" y="599" font-size="12.8" fill="#555" text-anchor="middle" >20</text>
<text id="te50ca41f" x="27.71" y="599" font-size="13.2" fill="#000" textLength="42.88" lengthAdjust="spacingAndGlyphs" >Акжол</text>
<text id="t52c6a4cb" x="270" y="598" font-size="12.9" fill="#000" >улица Акжол</text>
<text id="ta58ce61c" x="12.9" y="619" font-size="12.8" fill="#555" text-anchor="middle" >21</text>
<text id="t013455fc" x="27.74" y="619" font-size="13.2" fill="#000" textLength="72.8" lengthAdjust="spacingAndGlyphs" >Аккульская</text>
<text id="t2831eaf8" x="270" y="618" font-size="12.9" fill="#000" >Аккульская улица</text>
<text id="t05aa79cb" x="12.9" y="639" font-size="12.8" fill="#555" text-anchor="middle" >22</text>
<text id="t53fd193c" x="27.66" y="639" font-size="13.2" fill="#000" textLength="82.78" lengthAdjust="spacingAndGlyphs" >2 Аккульская</text>
<text id="tefcd8b57" x="270" y="638" font-size="12.9" fill="#000" >2 Аккульская улица</text>
<text id="t90c6b48a" x="12.9" y="659" font-size="12.8" fill="#555" text-anchor="middle" >23</text>
<text id="tfe0f0bf1" x="27.74" y="659" font-size="13.2" fill="#000" textLength="85.79" lengthAdjust="spacingAndGlyphs" >Акмолинская</text>
<text id="tf1ff738d" x="270" y="658" font-size="12.9" fill="#000" >Акмолинская улица</text>
<text id="t9626574c" x="12.9" y="679" font-size="12.8" fill="#555" text-anchor="middle" >24</text>
<text id="t81941658" x="27.74" y="679" font-size="13.2" fill="#000" textLength="37.91" lengthAdjust="spacingAndGlyphs" >Аксай</text>
<text id="teab27723" x="270" y="678" font-size="12.9" fill="#000" >улица Аксай</text>
<text id="td58aac28" x="12.9" y="699" font-size="12.8" fill="#555" text-anchor="middle" >25</text>
<text id="tf0a0e825" x="27.74" y="699" font-size="13.2" fill="#000" textLength="80.9" lengthAdjust="spacingAndGlyphs" >Аксаринская</text>
<text id="tcb32e2b9" x="270" y="698" font-size="12.9" fill="#000" >Аксаринская улица</text>
<text id="teebaabb6" x="12.9" y="719" font-size="12.8" fill="#555" text-anchor="middle" >26</text>
<text id="t060ece9a" x="27.74" y="719" font-size="13.2" fill="#000" textLength="63.97" lengthAdjust="spacingAndGlyphs" >Актауская</text>
<text id="t69a4330d" x="270" y="718" font-size="12.9" fill="#000" >Актауская улица</text>
<text id="t3588f582" x="12.9" y="739" font-size="12.8" fill="#555" text-anchor="middle" >27</text>
<text id="t43c628cc" x="27.74" y="739" font-size="13.2" fill="#000" textLength="85.18" lengthAdjust="spacingAndGlyphs" >Актюбинская</text>
<text id="te0fa6f7e" x="270" y="738" font-size="12.9" fill="#000" >Актюбинская улица</text>
<text id="td8b3b298" x="12.9" y="759" font-size="12.8" fill="#555" text-anchor="middle" >28</text>
<text id="tb011fc5c" x="26.71" y="759" font-size="13.2" fill="#000" textLength="126.04" lengthAdjust="spacingAndGlyphs" >Алаша Козбагарова</text>
<text id="t24c4c823" x="270" y="758" font-size="12.9" fill="#000" >улица Алаша Козбагарова</text>
<rect x="24" y="202" width="241" height="2" fill="#217346" />
<rect x="24" y="223" width="236" height="2" fill="#217346" />
<rect x="24" y="202" width="2" height="23" fill="#217346" />
<rect x="263" y="202" width="2" height="18" fill="#217346" />
<rect x="260" y="220" width="7" height="7" fill="#fff" />
<rect x="261" y="221" width="5" height="5" fill="#217346" />
</svg>
</body></html>
